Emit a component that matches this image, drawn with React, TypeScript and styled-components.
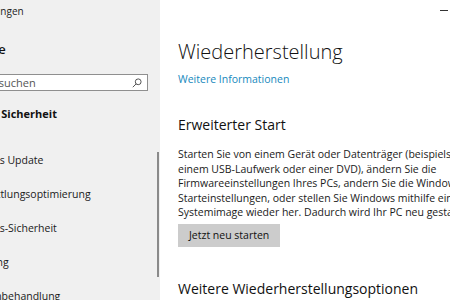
import React from "react";
import styled, { createGlobalStyle } from "styled-components";
import { Home, RefreshCw, ArrowUpDown, Shield, Upload, Wrench, History } from "lucide-react";

const GlobalStyle = createGlobalStyle`
  html, body {
    margin: 0;
    padding: 0;
    width: 450px;
    height: 300px;
    overflow: hidden;
    background: #ffffff;
  }
  body {
    font-family: "Open Sans", "Noto Sans", Arial, sans-serif;
    color: #1a1a1a;
  }
`;

const Window = styled.div`
  display: flex;
  height: 300px;
  margin-left: -100px;
`;

const Sidebar = styled.aside`
  position: relative;
  flex: 0 0 260px;
  display: flex;
  flex-direction: column;
  background: #f0f0f0;
  overflow: hidden;
`;

const AppTitle = styled.div`
  height: 22px;
  line-height: 22px;
  padding-left: 61px;
  font-size: 10px;
  color: #222;
`;

const HomeRow = styled.div`
  display: flex;
  align-items: center;
  gap: 10px;
  height: 22px;
  margin-top: 18px;
  padding-left: 23px;
  font-size: 13px;
  font-weight: 600;
  color: #111;
`;

const SearchBox = styled.div`
  display: flex;
  align-items: center;
  justify-content: space-between;
  box-sizing: border-box;
  height: 20px;
  margin: 16px 12px 0 31px;
  padding: 0 5px 0 8px;
  background: #ffffff;
  border: 1px solid #8f8f8f;
`;

const SearchText = styled.span`
  font-size: 11px;
  color: #555;
`;

const SectionHeader = styled.div`
  height: 22px;
  line-height: 22px;
  margin-top: 12px;
  padding-left: 34px;
  font-size: 11px;
  font-weight: 700;
  color: #111;
`;

const NavList = styled.ul`
  list-style: none;
  margin: 18px 0 0;
  padding: 0;
`;

const NavItem = styled.li`
  display: flex;
  align-items: center;
  gap: 14px;
  height: 34px;
  padding-left: 35px;
  font-size: 10.5px;
  color: #1a1a1a;
  white-space: nowrap;
`;

const ScrollThumb = styled.div`
  position: absolute;
  right: 1px;
  top: 152px;
  width: 2px;
  height: 125px;
  background: #8a8a8a;
`;

const Main = styled.main`
  flex: 0 0 420px;
  display: flex;
  flex-direction: column;
  padding-left: 18px;
  background: #ffffff;
`;

const TitleBar = styled.div`
  display: flex;
  justify-content: flex-end;
  height: 21px;
  margin-right: 139px;
`;

const MinButton = styled.div`
  display: flex;
  align-items: center;
  justify-content: center;
  width: 30px;
  height: 21px;
  &::before {
    content: "";
    width: 8px;
    height: 1px;
    background: #333;
  }
`;

const PageTitle = styled.h1`
  margin: 17px 0 0;
  font-size: 20px;
  line-height: 28px;
  font-weight: 300;
  color: #111;
`;

const Link = styled.a`
  margin-top: 5px;
  font-size: 10.5px;
  line-height: 16px;
  color: #1789bd;
  text-decoration: none;
`;

const SectionTitle = styled.h2<{ $gap: number }>`
  margin: ${(p) => p.$gap}px 0 0;
  font-size: 14px;
  line-height: 20px;
  font-weight: 400;
  color: #111;
`;

const Paragraph = styled.p`
  margin: 12px 0 0;
  font-size: 10.5px;
  line-height: 14.5px;
  color: #1a1a1a;
`;

const Line = styled.span`
  display: block;
  white-space: nowrap;
`;

const Button = styled.button`
  align-self: flex-start;
  box-sizing: border-box;
  height: 23px;
  margin-top: 4px;
  padding: 0 11px;
  border: none;
  background: #cccccc;
  font-family: inherit;
  font-size: 10.5px;
  color: #111;
`;

const SearchIcon = () => (
  <svg width="10" height="10" viewBox="0 0 10 10" fill="none" stroke="#555" strokeWidth="1">
    <circle cx="6.2" cy="3.8" r="2.9" />
    <line x1="4.1" y1="5.9" x2="0.8" y2="9.2" />
  </svg>
);

const navItems = [
  { icon: RefreshCw, label: "Windows Update" },
  { icon: Upload, label: "Übermittlungsoptimierung" },
  { icon: Shield, label: "Windows-Sicherheit" },
  { icon: ArrowUpDown, label: "Sicherung" },
  { icon: Wrench, label: "Problembehandlung" },
  { icon: History, label: "Wiederherstellung" },
];

export default function App() {
  return (
    <>
      <GlobalStyle />
      <Window>
        <Sidebar>
          <AppTitle>Einstellungen</AppTitle>
          <HomeRow>
            <Home size={12} strokeWidth={1.5} />
            Startseite
          </HomeRow>
          <SearchBox>
            <SearchText>Einstellung suchen</SearchText>
            <SearchIcon />
          </SearchBox>
          <SectionHeader>Update und Sicherheit</SectionHeader>
          <NavList>
            {navItems.map(({ icon: Icon, label }) => (
              <NavItem key={label}>
                <Icon size={11} strokeWidth={1.5} />
                {label}
              </NavItem>
            ))}
          </NavList>
          <ScrollThumb />
        </Sidebar>
        <Main>
          <TitleBar>
            <MinButton />
          </TitleBar>
          <PageTitle>Wiederherstellung</PageTitle>
          <Link href="#">Weitere Informationen</Link>
          <SectionTitle $gap={28}>Erweiterter Start</SectionTitle>
          <Paragraph>
            <Line>Starten Sie von einem Gerät oder Datenträger (beispielsweise</Line>
            <Line>einem USB-Laufwerk oder einer DVD), ändern Sie die</Line>
            <Line>Firmwareeinstellungen Ihres PCs, andern Sie die Windows-</Line>
            <Line>Starteinstellungen, oder stellen Sie Windows mithilfe eines</Line>
            <Line>Systemimage wieder her. Dadurch wird Ihr PC neu gestartet.</Line>
          </Paragraph>
          <Button>Jetzt neu starten</Button>
          <SectionTitle $gap={32}>Weitere Wiederherstellungsoptionen</SectionTitle>
        </Main>
      </Window>
    </>
  );
}
